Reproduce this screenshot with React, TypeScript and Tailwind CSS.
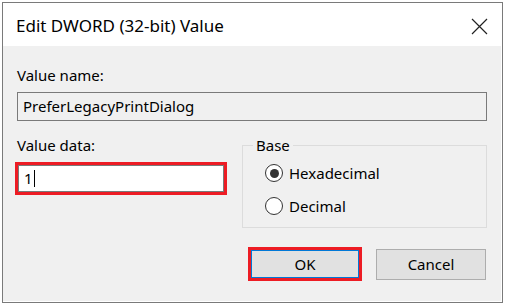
import React, { useState } from 'react';

const font = { fontFamily: '"Noto Sans", "Open Sans", sans-serif' };

const Radio: React.FC<{ checked: boolean; label: string; onClick: () => void }> = ({ checked, label, onClick }) => (
  <button type="button" onClick={onClick} className="flex items-center gap-[6px] h-[20px] text-[15px] leading-[20px] text-black">
    <span className="w-[18px] h-[18px] rounded-full border-[1.5px] border-[#333] bg-white flex items-center justify-center">
      {checked && <span className="w-[9px] h-[9px] rounded-full bg-[#333]" />}
    </span>
    {label}
  </button>
);

export default function App() {
  const [base, setBase] = useState<'hex' | 'dec'>('hex');
  const [data] = useState('1');

  return (
    <div className="w-[506px] h-[307px] bg-white pt-[2px] pl-[2px]" style={font}>
      <div className="w-[501px] h-[301px] border border-[#7a7a7a] flex flex-col">
        {/* title bar */}
        <div className="h-[43px] bg-white flex items-center justify-between pl-[13px] pr-[14px] pt-[3px]">
          <span className="text-[17px] text-black">Edit DWORD (32-bit) Value</span>
          <svg width="17" height="17" viewBox="0 0 17 17" className="text-[#222]">
            <path d="M1 1 L16 16 M16 1 L1 16" stroke="currentColor" strokeWidth="1.2" />
          </svg>
        </div>

        {/* body */}
        <div className="flex-1 bg-[#f0f0f0] border-r border-b border-white flex flex-col pl-[14px] pr-[14px] pt-[19px]">
          <div className="text-[15px] leading-[20px] text-black">Value name:</div>
          <div className="mt-[7px] h-[29px] border border-[#7a7a7a] bg-[#f0f0f0] flex items-center pl-[5px] text-[15px] text-black">
            PreferLegacyPrintDialog
          </div>

          <div className="flex mt-[14px]">
            <div className="w-[210px] flex flex-col">
              <div className="text-[15px] leading-[20px] text-black">Value data:</div>
              <div className="mt-[7px] ml-[-2px] w-[212px] h-[33px] border-[3px] border-[#ed1c24]">
                <div className="h-full border border-[#7a7a7a] bg-white flex items-center pl-[5px] text-[15px] text-black">
                  <span>{data}</span>
                  <span className="w-[1px] h-[17px] bg-black ml-[1px]" />
                </div>
              </div>
            </div>

            <fieldset className="ml-auto w-[245px] h-[93px] border border-[#dcdcdc] pl-[22px]">
              <legend className="ml-[-12px] px-[3px] text-[15px] leading-[20px] text-black">Base</legend>
              <div className="flex flex-col gap-[13px] mt-[8px]">
                <Radio checked={base === 'hex'} label="Hexadecimal" onClick={() => setBase('hex')} />
                <Radio checked={base === 'dec'} label="Decimal" onClick={() => setBase('dec')} />
              </div>
            </fieldset>
          </div>

          <div className="flex justify-end items-center gap-[14px] mt-[19px] mr-[1px]">
            <div className="w-[114px] h-[34px] border-[3px] border-[#ed1c24]">
              <button className="w-full h-full border border-[#0078d7] bg-[#e1e1e1] text-[15px] text-black">OK</button>
            </div>
            <button className="w-[110px] h-[31px] border border-[#adadad] bg-[#e1e1e1] text-[15px] text-black">Cancel</button>
          </div>
        </div>
      </div>
    </div>
  );
}
